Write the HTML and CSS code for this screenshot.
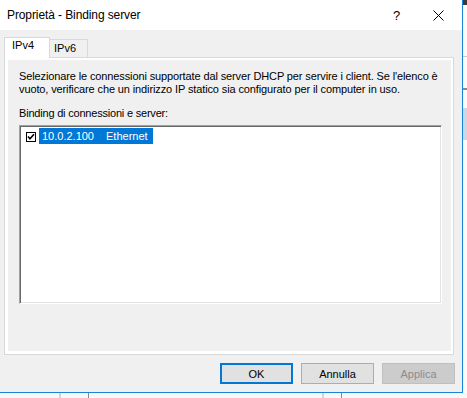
FILE: index.html
```html
<!DOCTYPE html>
<html lang="it">
<head>
    <meta charset="UTF-8">
    <title>Proprietà - Binding server</title>
    <link rel="stylesheet" href="styles.css">
</head>
<body>
    <div class="screen">
        <div class="window">
            <div class="title-bar">
                <span class="title">Proprietà - Binding server</span>
                <span class="help">?</span>
                <svg class="close" width="11" height="11" viewBox="0 0 11 11">
                    <path d="M0.5 0.5 L10.5 10.5 M10.5 0.5 L0.5 10.5" stroke="#000" stroke-width="1"/>
                </svg>
            </div>
            <div class="dialog-body">
                <div class="tabs">
                    <div class="tab active">IPv4</div>
                    <div class="tab">IPv6</div>
                </div>
                <div class="tab-panel">
                    <div class="page">
                        <p class="description">Selezionare le connessioni supportate dal server DHCP per servire i client. Se l'elenco è<br>vuoto, verificare che un indirizzo IP statico sia configurato per il computer in uso.</p>
                        <p class="label">Binding di connessioni e server:</p>
                        <div class="listbox">
                            <div class="list-item">
                                <svg class="check" width="10" height="10" viewBox="0 0 10 10">
                                    <rect x="0.5" y="0.5" width="9" height="9" fill="#fff" stroke="#000"/>
                                    <path d="M2 4.5 L4 6.8 L8 2.2" fill="none" stroke="#000" stroke-width="1.6"/>
                                </svg>
                                <div class="item-text">
                                    <span class="ip">10.0.2.100</span>
                                    <span>Ethernet</span>
                                </div>
                            </div>
                        </div>
                    </div>
                </div>
                <div class="buttons">
                    <button class="btn default">OK</button>
                    <button class="btn">Annulla</button>
                    <button class="btn" disabled>Applica</button>
                </div>
            </div>
        </div>
        <div class="behind-right">
            <div class="dark-top"></div>
            <div class="gap-a"></div>
            <div class="line-a"></div>
            <div class="gap-b"></div>
            <div class="line-b"></div>
            <div class="gap-c"></div>
            <div class="blue-block"></div>
        </div>
        <div class="behind-bottom">
            <div class="col-a"></div>
            <div class="col-b"></div>
            <div class="col-c"></div>
            <div class="col-d"></div>
            <div class="col-e"></div>
        </div>
    </div>
</body>
</html>
```

FILE: styles.css
```css
body {
    margin: 0;
    font-family: 'Liberation Sans', Arial, sans-serif;
    font-size: 11px;
    color: #000;
    background-color: #f7f7f7;
}
.screen {
    display: grid;
    grid-template-columns: 463px 4px;
    grid-template-rows: 393px 5px;
    width: 467px;
    height: 398px;
    overflow: hidden;
}
.window {
    display: flex;
    flex-direction: column;
    border-right: 1px solid #1883d7;
    border-bottom: 1px solid #1883d7;
    background-color: #f0f0f0;
}
.title-bar {
    display: flex;
    align-items: center;
    height: 30px;
    padding-left: 7px;
    background-color: #fff;
    font-size: 12px;
    line-height: 13px;
    letter-spacing: -0.1px;
}
.title {
    flex: 1;
}
.help {
    width: 8px;
    margin-right: 32px;
    font-size: 13px;
}
.close {
    margin-right: 18px;
}
.dialog-body {
    display: flex;
    flex-direction: column;
    padding: 7px 7px 0 4px;
    height: 362px;
    box-sizing: border-box;
}
.tabs {
    display: flex;
    align-items: flex-end;
    line-height: 13px;
}
.tab {
    box-sizing: border-box;
    height: 18px;
    width: 38px;
    padding: 2px 0 0 4px;
    border: 1px solid #d9d9d9;
    border-left: none;
    border-bottom: none;
}
.tab.active {
    position: relative;
    z-index: 1;
    width: 46px;
    height: 21px;
    margin-bottom: -1px;
    padding: 1px 0 0 7px;
    border-left: 1px solid #d9d9d9;
    background-color: #fff;
}
.tab-panel {
    box-sizing: border-box;
    width: 450px;
    height: 298px;
    padding: 2px 2px 3px 3px;
    border: 1px solid #d9d9d9;
    background-color: #fff;
}
.page {
    box-sizing: border-box;
    height: 100%;
    padding: 10px 0 0 11px;
    background-color: #f0f0f0;
}
.page p {
    margin: 0;
    line-height: 13px;
    white-space: nowrap;
}
.page .description {
    letter-spacing: -0.12px;
}
.page .label {
    margin-top: 11px;
    letter-spacing: -0.2px;
}
.listbox {
    box-sizing: border-box;
    width: 423px;
    height: 179px;
    margin-top: 5px;
    padding: 2px 0 0 6px;
    border: 1px solid;
    border-color: #a0a0a0 #fff #fff #a0a0a0;
    box-shadow: inset 1px 1px #696969, inset -1px -1px #e3e3e3;
    background-color: #fff;
}
.list-item {
    display: flex;
    align-items: center;
    gap: 3px;
}
.check {
    margin-top: 1px;
}
.item-text {
    display: flex;
    width: 114px;
    height: 16px;
    line-height: 16px;
    padding-left: 3px;
    box-sizing: border-box;
    color: #fff;
    background-color: #0078d7;
}
.ip {
    width: 64px;
}
.buttons {
    display: flex;
    justify-content: flex-end;
    gap: 8px;
    margin-top: 8px;
}
.btn {
    box-sizing: border-box;
    width: 73px;
    height: 21px;
    padding: 0;
    font-family: inherit;
    font-size: 11px;
    color: #000;
    border: 1px solid #adadad;
    background-color: #e1e1e1;
}
.btn.default {
    border: 2px solid #0078d7;
}
.btn:disabled {
    color: #8d8d8d;
    border-color: #bfbfbf;
    background-color: #cccccc;
}

/* bits of other windows showing behind the dialog */
.behind-right {
    display: flex;
    flex-direction: column;
    background-color: #fbfbfb;
}
.dark-top {
    height: 5px;
    background-color: #3a3a3a;
}
.gap-a {
    height: 51px;
}
.line-a {
    height: 1px;
    background-color: #c8c8c8;
}
.gap-b {
    height: 31px;
}
.line-b {
    height: 2px;
    background-color: #8a8a8a;
}
.gap-c {
    height: 18px;
}
.blue-block {
    height: 32px;
    background-color: #cdd8e6;
}
.behind-bottom {
    grid-column: 1 / 3;
    display: flex;
    background-color: #f7f7f7;
}
.col-a {
    width: 59px;
    border-right: 2px solid #d4d4d4;
}
.col-b {
    width: 27px;
    border-right: 1px solid #8a8a8a;
}
.col-c {
    width: 233px;
    border-right: 2px solid #d4d4d4;
}
.col-d {
    width: 17px;
    border-right: 1px solid #8a8a8a;
}
.col-e {
    flex: 1;
}
```
